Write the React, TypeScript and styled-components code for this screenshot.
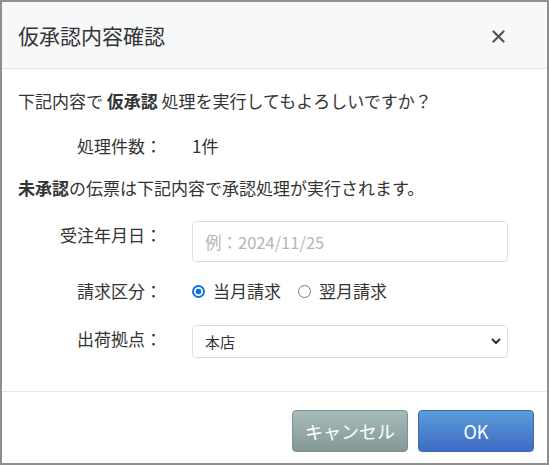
import React, { useState } from "react";
import styled, { createGlobalStyle } from "styled-components";

const GlobalStyle = createGlobalStyle`
  html, body {
    margin: 0;
    padding: 0;
    background: #ffffff;
  }
  body {
    font-family: "Noto Sans CJK JP", "Noto Sans", sans-serif;
    color: #333333;
  }
  * { box-sizing: border-box; }
`

const Dialog = styled.div`
  width: 549px;
  height: 465px;
  border: 2px solid #8e8e8e;
  background: #ffffff;
  display: flex;
  flex-direction: column;
`

const Header = styled.div`
  height: 67px;
  flex: none;
  display: flex;
  align-items: center;
  justify-content: space-between;
  padding: 0 42px 0 16px;
  background: #f7f8fa;
  border-bottom: 1px solid #e1e4e8;
`

const Title = styled.h1`
  margin: 0;
  font-size: 21px;
  font-weight: 400;
  line-height: 28px;
  color: #333333;
`

const CloseButton = styled.button`
  border: none;
  background: none;
  padding: 0;
  margin-top: 2px;
  width: 13px;
  height: 13px;
  display: flex;
  cursor: pointer;
`

const Body = styled.div`
  flex: 1;
  padding: 20px 16px 0;
  font-size: 17px;
  line-height: 24px;
`

const Lead = styled.p`
  margin: 0;
`

const Notice = styled.p`
  margin: 18px 0 0;
`

const Row = styled.div<{ $mt: number; $labelPad?: number }>`
  display: grid;
  grid-template-columns: 144px 316px;
  column-gap: 30px;
  align-items: ${p => (p.$labelPad !== undefined ? "start" : "center")};
  margin-top: ${p => p.$mt}px;

  & > label {
    padding-top: ${p => p.$labelPad ?? 0}px;
  }
`

const Label = styled.label`
  text-align: right;
  white-space: nowrap;
`

const TextInput = styled.input`
  height: 41px;
  width: 100%;
  border: 1px solid #dadee3;
  border-radius: 4px;
  padding: 0 12px;
  font-family: inherit;
  font-size: 16.5px;
  color: #333;
  outline: none;

  &::placeholder {
    color: #b5b5b5;
  }
`

const RadioGroup = styled.div`
  display: flex;
  align-items: center;
`

const RadioLabel = styled.label`
  display: flex;
  align-items: center;
  gap: 8px;
  margin-right: 17px;
  cursor: pointer;
`

const Radio = styled.input`
  appearance: none;
  margin: 0;
  width: 13px;
  height: 13px;
  border-radius: 50%;
  border: 1px solid #7a7a7a;
  background: #fff;

  &:checked {
    border: 2px solid #1170e8;
    background: radial-gradient(circle, #1170e8 0 2.6px, #ffffff 3.2px);
  }
`

const SelectWrap = styled.div`
  position: relative;
  height: 33px;
`

const Select = styled.select`
  appearance: none;
  width: 100%;
  height: 33px;
  border: 1px solid #dadee3;
  border-radius: 4px;
  padding: 0 30px 0 12px;
  font-family: inherit;
  font-size: 15px;
  color: #333;
  background: #fff;
  outline: none;
`

const Chevron = styled.svg`
  position: absolute;
  right: 7px;
  top: 13px;
  pointer-events: none;
`

const Footer = styled.div`
  height: 72px;
  flex: none;
  border-top: 1px solid #e3e6ea;
  display: flex;
  justify-content: flex-end;
  align-items: flex-start;
  gap: 10px;
  padding: 18px 13px 0 0;
`

const Button = styled.button<{ $variant: "cancel" | "ok" }>`
  width: 116px;
  height: 42px;
  border-radius: 4px;
  font-family: inherit;
  font-size: 18px;
  color: #ffffff;
  cursor: pointer;
  border: 1px solid ${p => (p.$variant === "ok" ? "#3b66ba" : "#7d8f8f")};
  background: ${p =>
    p.$variant === "ok"
      ? "linear-gradient(#5c9cd8, #3e6bc4)"
      : "linear-gradient(#a9bcbc, #849797)"};
`

const App = () => {
  const [billing, setBilling] = useState("current")

  return (
    <>
      <GlobalStyle />
      <Dialog>
        <Header>
          <Title>仮承認内容確認</Title>
          <CloseButton aria-label="閉じる">
            <svg width="13" height="13" viewBox="0 0 13 13">
              <path d="M1.5 1.5 L11.5 11.5 M11.5 1.5 L1.5 11.5" stroke="#555" strokeWidth="2.2" strokeLinecap="round" />
            </svg>
          </CloseButton>
        </Header>

        <Body>
          <Lead>下記内容で <b>仮承認</b> 処理を実行してもよろしいですか？</Lead>

          <Row $mt={21}>
            <Label>処理件数：</Label>
            <span>1件</span>
          </Row>

          <Notice><b>未承認</b>の伝票は下記内容で承認処理が実行されます。</Notice>

          <Row $mt={21} $labelPad={2}>
            <Label>受注年月日：</Label>
            <TextInput placeholder="例：2024/11/25" />
          </Row>

          <Row $mt={17}>
            <Label>請求区分：</Label>
            <RadioGroup>
              <RadioLabel>
                <Radio type="radio" name="billing" checked={billing === "current"} onChange={() => setBilling("current")} />
                当月請求
              </RadioLabel>
              <RadioLabel>
                <Radio type="radio" name="billing" checked={billing === "next"} onChange={() => setBilling("next")} />
                翌月請求
              </RadioLabel>
            </RadioGroup>
          </Row>

          <Row $mt={22} $labelPad={2}>
            <Label>出荷拠点：</Label>
            <SelectWrap>
              <Select defaultValue="main">
                <option value="main">本店</option>
              </Select>
              <Chevron width="10" height="7" viewBox="0 0 10 7">
                <path d="M1.5 1.5 L5 5 L8.5 1.5" stroke="#333" strokeWidth="2" fill="none" strokeLinecap="round" strokeLinejoin="round" />
              </Chevron>
            </SelectWrap>
          </Row>
        </Body>

        <Footer>
          <Button $variant="cancel">キャンセル</Button>
          <Button $variant="ok">OK</Button>
        </Footer>
      </Dialog>
    </>
  )
}

export default App
